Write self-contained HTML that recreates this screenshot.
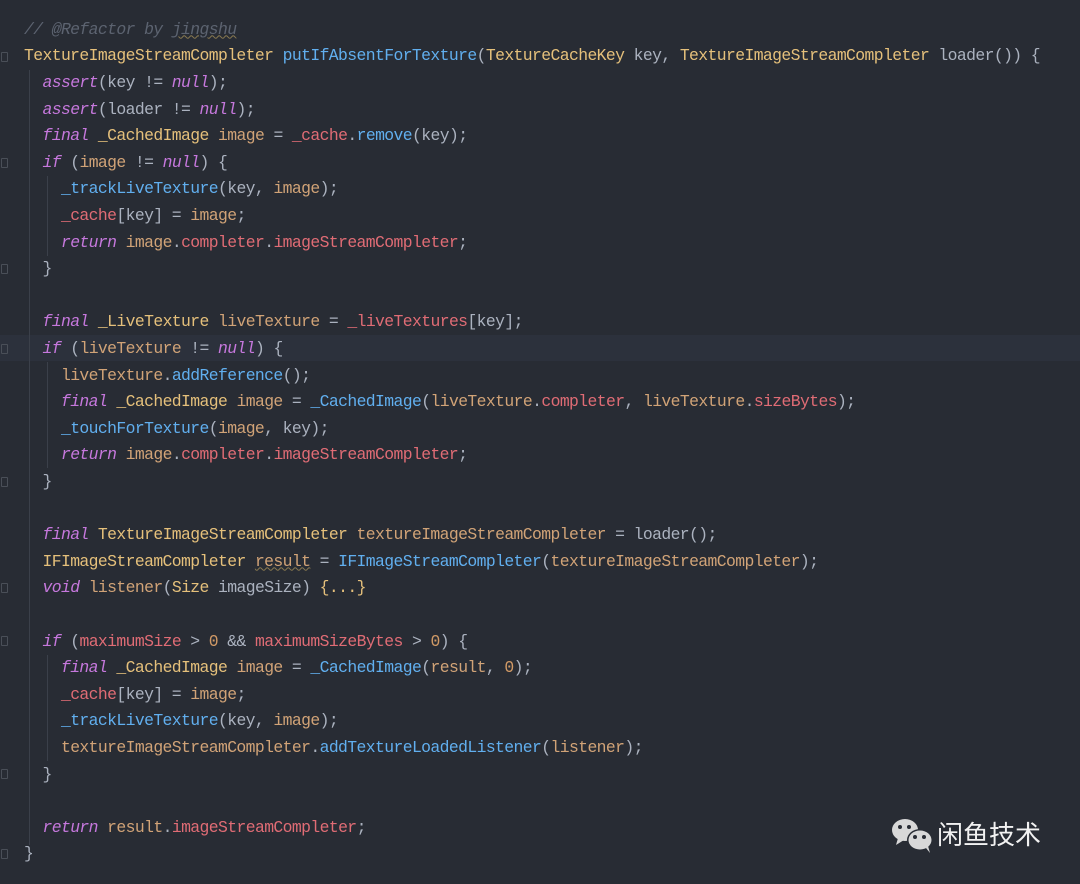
<!DOCTYPE html>
<html><head><meta charset="utf-8"><style>
html,body{margin:0;padding:0;}
body{width:1080px;height:884px;background:#282c34;position:relative;overflow:hidden;font-family:"Liberation Mono",monospace;font-size:16.4px;letter-spacing:-0.6px;color:#abb2bf;}
.l{position:absolute;left:24px;height:26.6px;line-height:26.6px;white-space:pre;}
.hl{position:absolute;left:0;width:1080px;top:335px;height:26px;background:#2c313c;}
.c{color:#5c6370;font-style:italic}
.y{color:#e5c07b}
.f{color:#61afef}
.k{color:#c678dd;font-style:italic}
.r{color:#e06c75}
.v{color:#d1a377}
.n{color:#d19a66}
.g{position:absolute;width:1px;background:#3b404a;}
.u{text-decoration:underline wavy #8a7a50;text-decoration-thickness:1px}
.fm{position:absolute;left:1px;width:5px;height:8px;border:1px solid #4a4f58;border-radius:1px;}
</style></head><body>
<div class="hl"></div>
<div class="g" style="left:29px;top:70px;height:775px"></div>
<div class="g" style="left:47px;top:176px;height:80px"></div>
<div class="g" style="left:47px;top:362px;height:106px"></div>
<div class="g" style="left:47px;top:655px;height:106px"></div>
<div class="fm" style="top:52px"></div>
<div class="fm" style="top:158px"></div>
<div class="fm" style="top:264px"></div>
<div class="fm" style="top:344px"></div>
<div class="fm" style="top:477px"></div>
<div class="fm" style="top:583px"></div>
<div class="fm" style="top:636px"></div>
<div class="fm" style="top:769px"></div>
<div class="fm" style="top:849px"></div>
<div class="l" style="top:16.7px"><span class="c">// @Refactor by <span class="u">jingshu</span></span></div>
<div class="l" style="top:43.3px"><span class="y">TextureImageStreamCompleter</span> <span class="f">putIfAbsentForTexture</span>(<span class="y">TextureCacheKey</span> key, <span class="y">TextureImageStreamCompleter</span> loader()) {</div>
<div class="l" style="top:69.9px">  <span class="k">assert</span>(key != <span class="k">null</span>);</div>
<div class="l" style="top:96.5px">  <span class="k">assert</span>(loader != <span class="k">null</span>);</div>
<div class="l" style="top:123.1px">  <span class="k">final</span> <span class="y">_CachedImage</span> <span class="v">image</span> = <span class="r">_cache</span>.<span class="f">remove</span>(key);</div>
<div class="l" style="top:149.7px">  <span class="k">if</span> (<span class="v">image</span> != <span class="k">null</span>) {</div>
<div class="l" style="top:176.3px">    <span class="f">_trackLiveTexture</span>(key, <span class="v">image</span>);</div>
<div class="l" style="top:202.9px">    <span class="r">_cache</span>[key] = <span class="v">image</span>;</div>
<div class="l" style="top:229.5px">    <span class="k">return</span> <span class="v">image</span>.<span class="r">completer</span>.<span class="r">imageStreamCompleter</span>;</div>
<div class="l" style="top:256.1px">  }</div>
<div class="l" style="top:309.3px">  <span class="k">final</span> <span class="y">_LiveTexture</span> <span class="v">liveTexture</span> = <span class="r">_liveTextures</span>[key];</div>
<div class="l" style="top:335.9px">  <span class="k">if</span> (<span class="v">liveTexture</span> != <span class="k">null</span>) {</div>
<div class="l" style="top:362.5px">    <span class="v">liveTexture</span>.<span class="f">addReference</span>();</div>
<div class="l" style="top:389.1px">    <span class="k">final</span> <span class="y">_CachedImage</span> <span class="v">image</span> = <span class="f">_CachedImage</span>(<span class="v">liveTexture</span>.<span class="r">completer</span>, <span class="v">liveTexture</span>.<span class="r">sizeBytes</span>);</div>
<div class="l" style="top:415.7px">    <span class="f">_touchForTexture</span>(<span class="v">image</span>, key);</div>
<div class="l" style="top:442.3px">    <span class="k">return</span> <span class="v">image</span>.<span class="r">completer</span>.<span class="r">imageStreamCompleter</span>;</div>
<div class="l" style="top:468.9px">  }</div>
<div class="l" style="top:522.1px">  <span class="k">final</span> <span class="y">TextureImageStreamCompleter</span> <span class="v">textureImageStreamCompleter</span> = loader();</div>
<div class="l" style="top:548.7px">  <span class="y">IFImageStreamCompleter</span> <span class="v u">result</span> = <span class="f">IFImageStreamCompleter</span>(<span class="v">textureImageStreamCompleter</span>);</div>
<div class="l" style="top:575.3px">  <span class="k">void</span> <span class="v">listener</span>(<span class="y">Size</span> imageSize) <span class="y">{...}</span></div>
<div class="l" style="top:628.5px">  <span class="k">if</span> (<span class="r">maximumSize</span> &gt; <span class="n">0</span> &amp;&amp; <span class="r">maximumSizeBytes</span> &gt; <span class="n">0</span>) {</div>
<div class="l" style="top:655.1px">    <span class="k">final</span> <span class="y">_CachedImage</span> <span class="v">image</span> = <span class="f">_CachedImage</span>(<span class="v">result</span>, <span class="n">0</span>);</div>
<div class="l" style="top:681.7px">    <span class="r">_cache</span>[key] = <span class="v">image</span>;</div>
<div class="l" style="top:708.3px">    <span class="f">_trackLiveTexture</span>(key, <span class="v">image</span>);</div>
<div class="l" style="top:734.9px">    <span class="v">textureImageStreamCompleter</span>.<span class="f">addTextureLoadedListener</span>(<span class="v">listener</span>);</div>
<div class="l" style="top:761.5px">  }</div>
<div class="l" style="top:814.7px">  <span class="k">return</span> <span class="v">result</span>.<span class="r">imageStreamCompleter</span>;</div>
<div class="l" style="top:841.3px">}</div>
<svg style="position:absolute;left:890px;top:816px" width="48" height="38" viewBox="0 0 48 38">
<ellipse cx="15" cy="14" rx="13" ry="11" fill="#d8d8d8"/>
<path d="M8 22 L6 29 L14 24 Z" fill="#d8d8d8"/>
<circle cx="10" cy="11" r="2" fill="#282c34"/><circle cx="19" cy="11" r="2" fill="#282c34"/>
<ellipse cx="30" cy="24" rx="13" ry="11" fill="#282c34"/>
<ellipse cx="30" cy="24" rx="11.5" ry="9.5" fill="#d8d8d8"/>
<path d="M36 32 L40 37 L38 30 Z" fill="#d8d8d8"/>
<circle cx="25" cy="21" r="2" fill="#282c34"/><circle cx="34" cy="21" r="2" fill="#282c34"/>
</svg>
<div style="position:absolute;left:937px;top:818px;font-family:'Liberation Sans','Noto Sans CJK SC',sans-serif;font-size:26px;letter-spacing:0;line-height:34px;color:#f2f2f2;">闲鱼技术</div>
</body></html>
